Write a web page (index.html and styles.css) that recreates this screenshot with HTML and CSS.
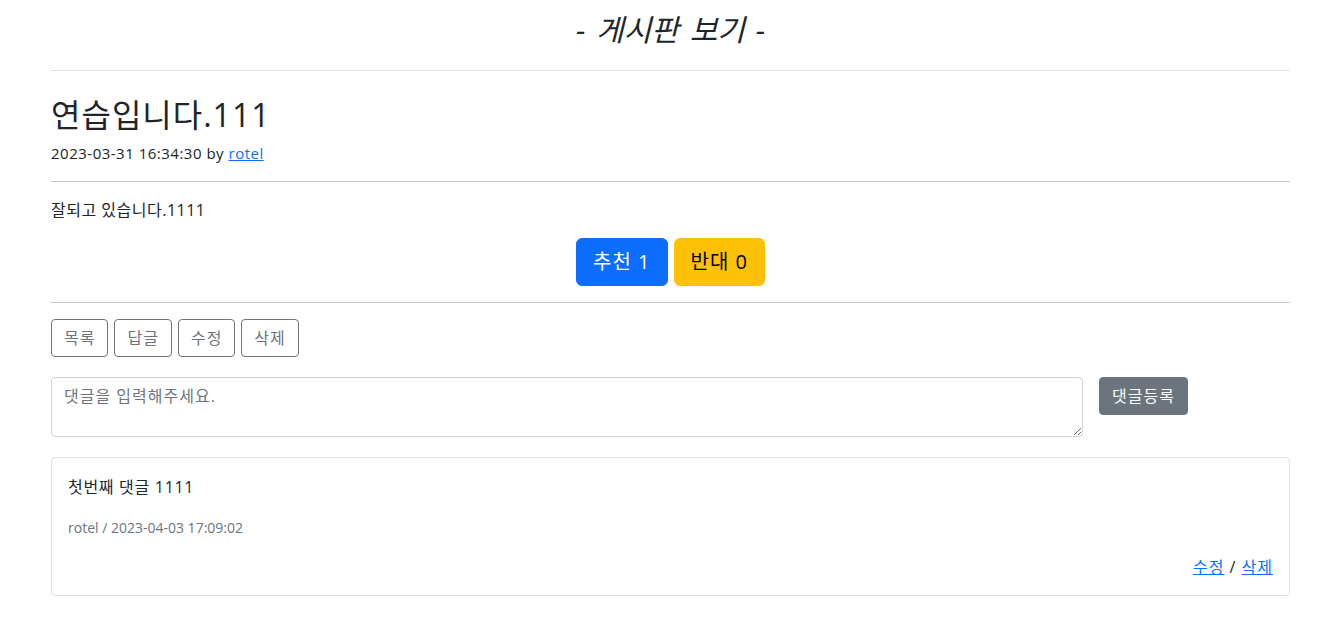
FILE: index.html
```html
<html>
<head>
	<meta charset="utf-8">
	<title>게시판 보기</title>
<link rel="stylesheet" href="styles.css">
</head>
<body>
	<div class="container">
		<h1 class="page-title">- 게시판 보기 -</h1>
		<hr class="light">

		<h2 class="post-title">연습입니다.111</h2>
		<div class="post-meta">2023-03-31 16:34:30 by <a href="#">rotel</a></div>
		<hr>

		<div class="post-body">잘되고 있습니다.1111</div>
		<div class="votes">
			<button class="btn btn-lg btn-primary">추천 1</button>
			<button class="btn btn-lg btn-warning">반대 0</button>
		</div>
		<hr class="after-votes">

		<div class="actions">
			<button class="btn btn-outline">목록</button>
			<button class="btn btn-outline">답글</button>
			<button class="btn btn-outline">수정</button>
			<button class="btn btn-outline">삭제</button>
		</div>

		<form class="reply-form">
			<textarea class="reply-input" placeholder="댓글을 입력해주세요."></textarea>
			<button type="button" class="btn btn-secondary">댓글등록</button>
		</form>

		<div class="comment">
			<div class="comment-text">첫번째 댓글 1111</div>
			<div class="comment-meta">rotel / 2023-04-03 17:09:02</div>
			<div class="comment-links"><a href="#">수정</a> / <a href="#">삭제</a></div>
		</div>
	</div>
</body>
</html>
```

FILE: styles.css
```css
body {
	margin: 0;
	background-color: #fff;
	color: #212529;
	font-family: "Open Sans", "Noto Sans CJK KR", sans-serif;
	font-size: 16px;
}

.container {
	margin: 0 48px 0 51px;
}

a {
	color: #0d6efd;
}

hr {
	border: 0;
	border-top: 1px solid #c8c8c8;
	margin: 17px 0 0 0;
	height: 0;
}

hr.light {
	border-top-color: #dee2e6;
	margin-top: 20px;
}

hr.after-votes {
	margin-top: 16px;
}

.page-title {
	margin: 0;
	padding-top: 10px;
	font-size: 30px;
	line-height: 40px;
	font-weight: normal;
	font-style: italic;
	text-align: center;
	word-spacing: 3px;
}

.post-title {
	margin: 24px 0 0 0;
	font-size: 32px;
	line-height: 40px;
	font-weight: normal;
	letter-spacing: 1px;
}

.post-meta {
	margin-top: 7px;
	font-size: 15px;
	line-height: 22px;
	letter-spacing: 0.5px;
}

.post-body {
	margin-top: 17px;
	font-size: 16px;
	line-height: 22px;
	letter-spacing: 0.5px;
}

.votes {
	margin-top: 17px;
	display: flex;
	justify-content: center;
	gap: 6px;
}

.btn {
	font-family: "Open Sans", "Noto Sans CJK KR", sans-serif;
	font-size: 16px;
	line-height: 24px;
	letter-spacing: 1px;
	padding: 6px 12px;
	border: 1px solid transparent;
	border-radius: 4px;
	background: none;
	cursor: pointer;
}

.btn-lg {
	font-size: 20px;
	line-height: 30px;
	padding: 8px 16px;
	border-radius: 6px;
}

.btn-primary {
	background-color: #0d6efd;
	border-color: #0d6efd;
	color: #fff;
}

.btn-warning {
	background-color: #ffc107;
	border-color: #ffc107;
	color: #000;
}

.btn-outline {
	border-color: #6c757d;
	color: #6c757d;
}

.btn-secondary {
	background-color: #6c757d;
	border-color: #6c757d;
	color: #fff;
}

.actions {
	margin-top: 16px;
	display: flex;
	gap: 6px;
}

.reply-form {
	margin: 20px 102px 0 0;
	display: flex;
	align-items: flex-start;
	gap: 16px;
}

.reply-input {
	flex: 1;
	height: 60px;
	box-sizing: border-box;
	padding: 6px 12px;
	border: 1px solid #ced4da;
	border-radius: 4px;
	font-family: "Open Sans", "Noto Sans CJK KR", sans-serif;
	font-size: 16px;
	line-height: 24px;
	letter-spacing: 1px;
	color: #212529;
}

.reply-input::placeholder {
	color: #6c757d;
}

.comment {
	margin-top: 20px;
	border: 1px solid #dee2e6;
	border-radius: 4px;
	padding: 17px 16px 16px 16px;
}

.comment-text {
	font-size: 16px;
	line-height: 24px;
	letter-spacing: 0.7px;
}

.comment-meta {
	margin-top: 19px;
	font-size: 14px;
	line-height: 20px;
	color: #6c757d;
}

.comment-links {
	margin-top: 17px;
	text-align: right;
	font-size: 16px;
	line-height: 24px;
	letter-spacing: 1px;
}
```
